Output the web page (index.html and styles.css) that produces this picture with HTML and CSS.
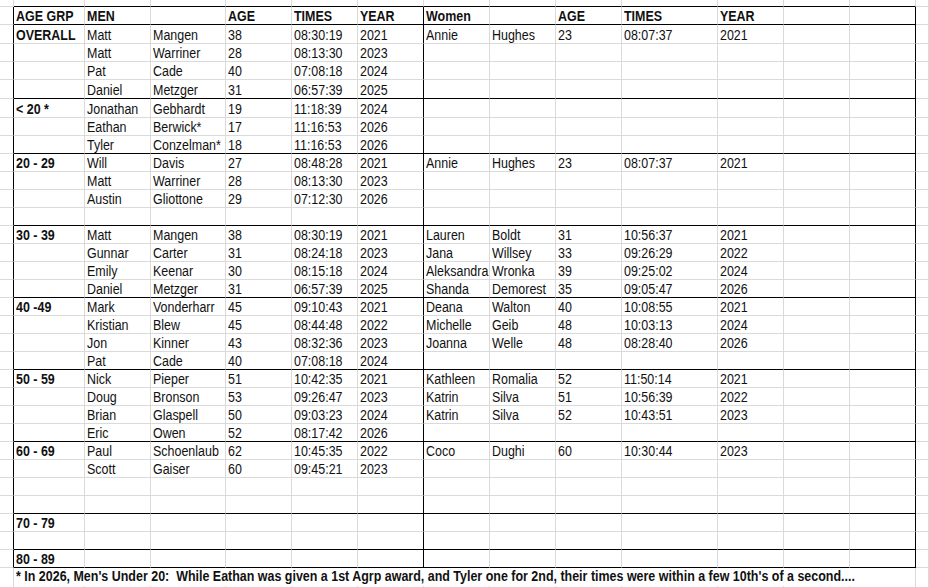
FILE: index.html
```html
<!DOCTYPE html>
<html lang="en">
<head>
<meta charset="utf-8">
<title>Age Group Records</title>
<link rel="stylesheet" href="styles.css">
</head>
<body>
<div class="sheet">
  <div class="row strip"><span></span><span></span><span></span><span></span><span></span><span></span><span></span><span></span><span></span><span></span><span></span><span></span><span></span><span></span><span></span></div>
  <div class="row in head end"><span></span><span><span>AGE GRP</span></span><span><span>MEN</span></span><span></span><span><span>AGE</span></span><span><span>TIMES</span></span><span><span>YEAR</span></span><span><span>Women</span></span><span></span><span><span>AGE</span></span><span><span>TIMES</span></span><span><span>YEAR</span></span><span></span><span></span><span></span></div>

  <div class="row in tall"><span></span><span><span>OVERALL</span></span><span><span>Matt</span></span><span><span>Mangen</span></span><span><span>38</span></span><span><span>08:30:19</span></span><span><span>2021</span></span><span><span>Annie</span></span><span><span>Hughes</span></span><span><span>23</span></span><span><span>08:07:37</span></span><span><span>2021</span></span><span></span><span></span><span></span></div>
  <div class="row in"><span></span><span></span><span><span>Matt</span></span><span><span>Warriner</span></span><span><span>28</span></span><span><span>08:13:30</span></span><span><span>2023</span></span><span></span><span></span><span></span><span></span><span></span><span></span><span></span><span></span></div>
  <div class="row in"><span></span><span></span><span><span>Pat</span></span><span><span>Cade</span></span><span><span>40</span></span><span><span>07:08:18</span></span><span><span>2024</span></span><span></span><span></span><span></span><span></span><span></span><span></span><span></span><span></span></div>
  <div class="row in tall end"><span></span><span></span><span><span>Daniel</span></span><span><span>Metzger</span></span><span><span>31</span></span><span><span>06:57:39</span></span><span><span>2025</span></span><span></span><span></span><span></span><span></span><span></span><span></span><span></span><span></span></div>

  <div class="row in tall"><span></span><span><span>&lt; 20 *</span></span><span><span>Jonathan</span></span><span><span>Gebhardt</span></span><span><span>19</span></span><span><span>11:18:39</span></span><span><span>2024</span></span><span></span><span></span><span></span><span></span><span></span><span></span><span></span><span></span></div>
  <div class="row in"><span></span><span></span><span><span>Eathan</span></span><span><span>Berwick*</span></span><span><span>17</span></span><span><span>11:16:53</span></span><span><span>2026</span></span><span></span><span></span><span></span><span></span><span></span><span></span><span></span><span></span></div>
  <div class="row in end"><span></span><span></span><span><span>Tyler</span></span><span><span>Conzelman*</span></span><span><span>18</span></span><span><span>11:16:53</span></span><span><span>2026</span></span><span></span><span></span><span></span><span></span><span></span><span></span><span></span><span></span></div>

  <div class="row in"><span></span><span><span>20 - 29</span></span><span><span>Will</span></span><span><span>Davis</span></span><span><span>27</span></span><span><span>08:48:28</span></span><span><span>2021</span></span><span><span>Annie</span></span><span><span>Hughes</span></span><span><span>23</span></span><span><span>08:07:37</span></span><span><span>2021</span></span><span></span><span></span><span></span></div>
  <div class="row in"><span></span><span></span><span><span>Matt</span></span><span><span>Warriner</span></span><span><span>28</span></span><span><span>08:13:30</span></span><span><span>2023</span></span><span></span><span></span><span></span><span></span><span></span><span></span><span></span><span></span></div>
  <div class="row in"><span></span><span></span><span><span>Austin</span></span><span><span>Gliottone</span></span><span><span>29</span></span><span><span>07:12:30</span></span><span><span>2026</span></span><span></span><span></span><span></span><span></span><span></span><span></span><span></span><span></span></div>
  <div class="row in end"><span></span><span></span><span></span><span></span><span></span><span></span><span></span><span></span><span></span><span></span><span></span><span></span><span></span><span></span><span></span></div>

  <div class="row in"><span></span><span><span>30 - 39</span></span><span><span>Matt</span></span><span><span>Mangen</span></span><span><span>38</span></span><span><span>08:30:19</span></span><span><span>2021</span></span><span><span>Lauren</span></span><span><span>Boldt</span></span><span><span>31</span></span><span><span>10:56:37</span></span><span><span>2021</span></span><span></span><span></span><span></span></div>
  <div class="row in"><span></span><span></span><span><span>Gunnar</span></span><span><span>Carter</span></span><span><span>31</span></span><span><span>08:24:18</span></span><span><span>2023</span></span><span><span>Jana</span></span><span><span>Willsey</span></span><span><span>33</span></span><span><span>09:26:29</span></span><span><span>2022</span></span><span></span><span></span><span></span></div>
  <div class="row in"><span></span><span></span><span><span>Emily</span></span><span><span>Keenar</span></span><span><span>30</span></span><span><span>08:15:18</span></span><span><span>2024</span></span><span><span>Aleksandra</span></span><span><span>Wronka</span></span><span><span>39</span></span><span><span>09:25:02</span></span><span><span>2024</span></span><span></span><span></span><span></span></div>
  <div class="row in end"><span></span><span></span><span><span>Daniel</span></span><span><span>Metzger</span></span><span><span>31</span></span><span><span>06:57:39</span></span><span><span>2025</span></span><span><span>Shanda</span></span><span><span>Demorest</span></span><span><span>35</span></span><span><span>09:05:47</span></span><span><span>2026</span></span><span></span><span></span><span></span></div>

  <div class="row in"><span></span><span><span>40 -49</span></span><span><span>Mark</span></span><span><span>Vonderharr</span></span><span><span>45</span></span><span><span>09:10:43</span></span><span><span>2021</span></span><span><span>Deana</span></span><span><span>Walton</span></span><span><span>40</span></span><span><span>10:08:55</span></span><span><span>2021</span></span><span></span><span></span><span></span></div>
  <div class="row in"><span></span><span></span><span><span>Kristian</span></span><span><span>Blew</span></span><span><span>45</span></span><span><span>08:44:48</span></span><span><span>2022</span></span><span><span>Michelle</span></span><span><span>Geib</span></span><span><span>48</span></span><span><span>10:03:13</span></span><span><span>2024</span></span><span></span><span></span><span></span></div>
  <div class="row in"><span></span><span></span><span><span>Jon</span></span><span><span>Kinner</span></span><span><span>43</span></span><span><span>08:32:36</span></span><span><span>2023</span></span><span><span>Joanna</span></span><span><span>Welle</span></span><span><span>48</span></span><span><span>08:28:40</span></span><span><span>2026</span></span><span></span><span></span><span></span></div>
  <div class="row in end"><span></span><span></span><span><span>Pat</span></span><span><span>Cade</span></span><span><span>40</span></span><span><span>07:08:18</span></span><span><span>2024</span></span><span></span><span></span><span></span><span></span><span></span><span></span><span></span><span></span></div>

  <div class="row in"><span></span><span><span>50 - 59</span></span><span><span>Nick</span></span><span><span>Pieper</span></span><span><span>51</span></span><span><span>10:42:35</span></span><span><span>2021</span></span><span><span>Kathleen</span></span><span><span>Romalia</span></span><span><span>52</span></span><span><span>11:50:14</span></span><span><span>2021</span></span><span></span><span></span><span></span></div>
  <div class="row in"><span></span><span></span><span><span>Doug</span></span><span><span>Bronson</span></span><span><span>53</span></span><span><span>09:26:47</span></span><span><span>2023</span></span><span><span>Katrin</span></span><span><span>Silva</span></span><span><span>51</span></span><span><span>10:56:39</span></span><span><span>2022</span></span><span></span><span></span><span></span></div>
  <div class="row in"><span></span><span></span><span><span>Brian</span></span><span><span>Glaspell</span></span><span><span>50</span></span><span><span>09:03:23</span></span><span><span>2024</span></span><span><span>Katrin</span></span><span><span>Silva</span></span><span><span>52</span></span><span><span>10:43:51</span></span><span><span>2023</span></span><span></span><span></span><span></span></div>
  <div class="row in end"><span></span><span></span><span><span>Eric</span></span><span><span>Owen</span></span><span><span>52</span></span><span><span>08:17:42</span></span><span><span>2026</span></span><span></span><span></span><span></span><span></span><span></span><span></span><span></span><span></span></div>

  <div class="row in"><span></span><span><span>60 - 69</span></span><span><span>Paul</span></span><span><span>Schoenlaub</span></span><span><span>62</span></span><span><span>10:45:35</span></span><span><span>2022</span></span><span><span>Coco</span></span><span><span>Dughi</span></span><span><span>60</span></span><span><span>10:30:44</span></span><span><span>2023</span></span><span></span><span></span><span></span></div>
  <div class="row in"><span></span><span></span><span><span>Scott</span></span><span><span>Gaiser</span></span><span><span>60</span></span><span><span>09:45:21</span></span><span><span>2023</span></span><span></span><span></span><span></span><span></span><span></span><span></span><span></span><span></span></div>
  <div class="row in"><span></span><span></span><span></span><span></span><span></span><span></span><span></span><span></span><span></span><span></span><span></span><span></span><span></span><span></span><span></span></div>
  <div class="row in end"><span></span><span></span><span></span><span></span><span></span><span></span><span></span><span></span><span></span><span></span><span></span><span></span><span></span><span></span><span></span></div>

  <div class="row in"><span></span><span><span>70 - 79</span></span><span></span><span></span><span></span><span></span><span></span><span></span><span></span><span></span><span></span><span></span><span></span><span></span><span></span></div>
  <div class="row in end"><span></span><span></span><span></span><span></span><span></span><span></span><span></span><span></span><span></span><span></span><span></span><span></span><span></span><span></span><span></span></div>

  <div class="row in end"><span></span><span><span>80 - 89</span></span><span></span><span></span><span></span><span></span><span></span><span></span><span></span><span></span><span></span><span></span><span></span><span></span><span></span></div>

  <div class="row note"><span></span><span class="wide"><span>* In 2026, Men's Under 20:  While Eathan was given a 1st Agrp award, and Tyler one for 2nd, their times were within a few 10th's of a second....</span></span><span></span></div>
  <div class="row rest"><span></span><span></span><span></span><span></span><span></span><span></span><span></span><span></span><span></span><span></span><span></span><span></span><span></span><span></span><span></span></div>
</div>
</body>
</html>
```

FILE: styles.css
```css
html, body {
  margin: 0;
  padding: 0;
  background: #ffffff;
}

body {
  font-family: "Liberation Sans", Arial, sans-serif;
  font-size: 14px;
  color: #111111;
  overflow: hidden;
}

.sheet {
  width: 929px;
}

.row {
  display: grid;
  grid-template-columns: 14px 71px 66px 75px 66px 66px 66px 66px 66px 66px 96px 66px 66px 66px 13px;
  height: 18px;
}

.row.tall {
  height: 19px;
}

.row.strip {
  height: 7px;
}

.row.rest {
  height: 20px;
}

.row > span {
  box-sizing: border-box;
  min-width: 0;
  display: flex;
  align-items: flex-end;
  padding-left: 2px;
  border-right: 1px solid #dadada;
  border-bottom: 1px solid #dadada;
  white-space: pre;
}

.row > span > span {
  display: block;
  line-height: 16px;
  transform: scaleX(0.89);
  transform-origin: left bottom;
}

/* bold: header row and the age-group column */
.head > span,
.row > span:nth-child(2) {
  font-weight: bold;
}

/* black outline of the table: left, men/women divider, right */
.in > span:nth-child(1),
.in > span:nth-child(7),
.in > span:nth-child(14) {
  border-right-color: #000000;
}

/* black rule under the top strip and at the end of each age group */
.strip > span:nth-child(n+2):nth-child(-n+14),
.end > span:nth-child(n+2):nth-child(-n+14) {
  border-bottom-color: #000000;
}

.note > .wide {
  grid-column: 2 / 15;
}

.note > .wide > span {
  padding-bottom: 3px;
}
```
